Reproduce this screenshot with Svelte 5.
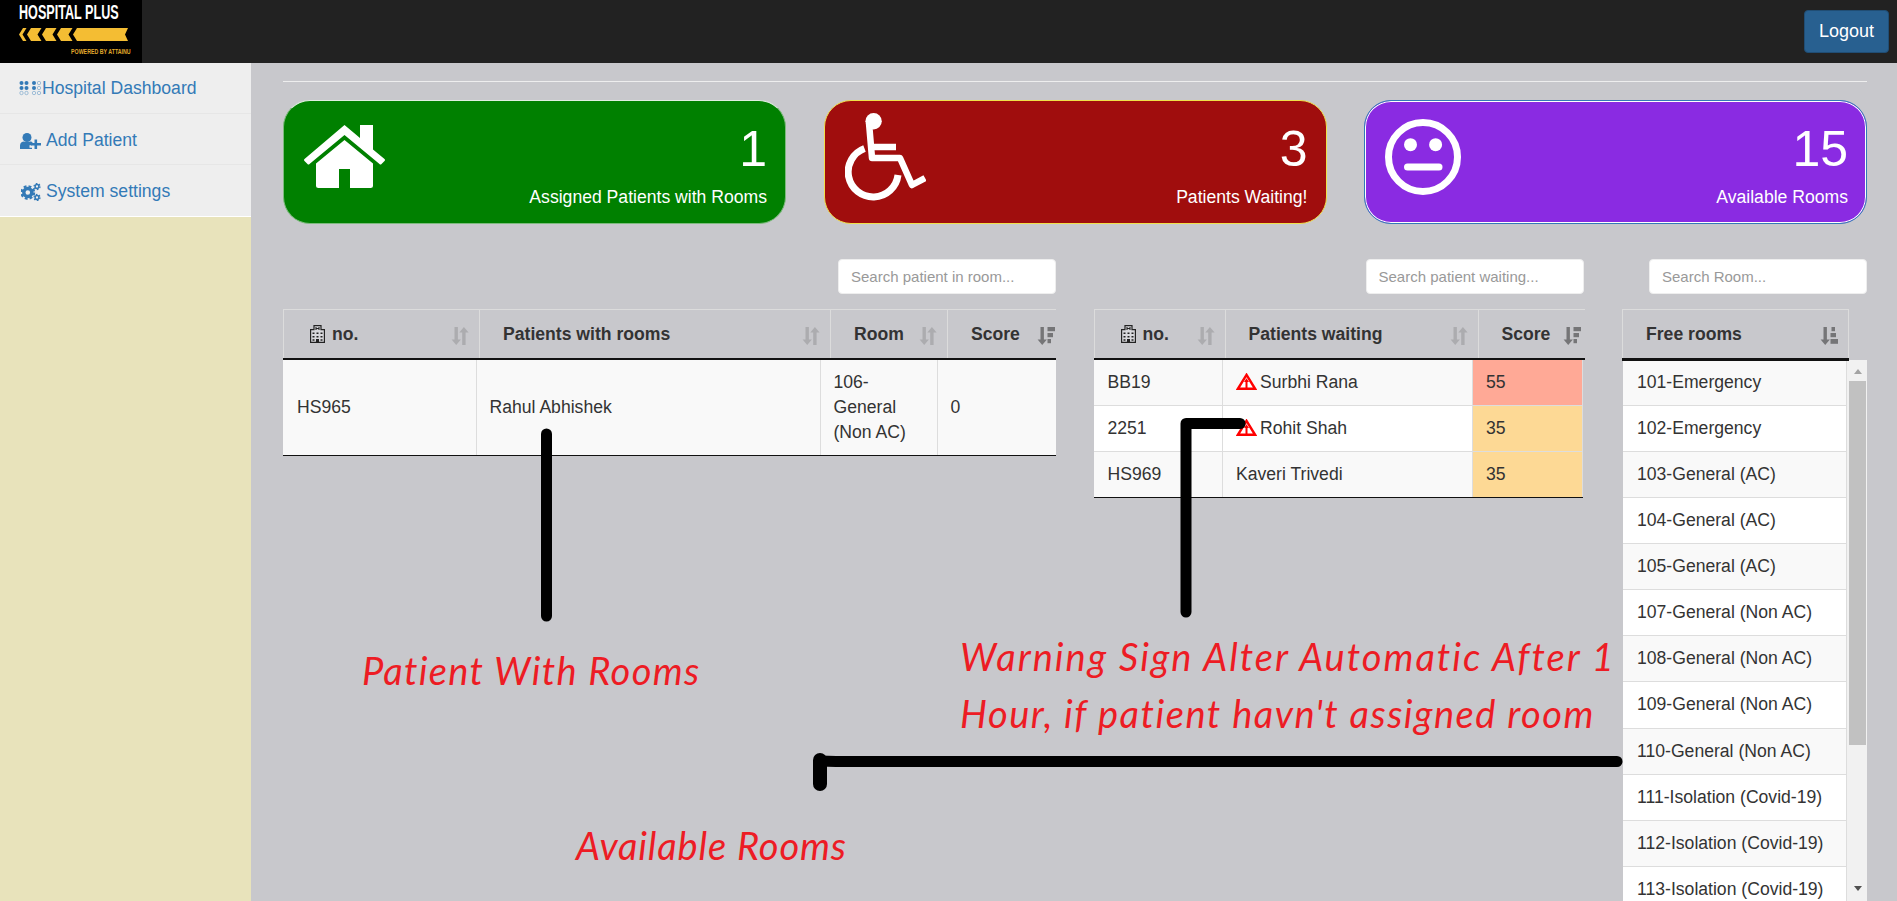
<script>
  const waiting = [
    { no: 'BB19', name: 'Surbhi Rana', score: 55, warn: true },
    { no: '2251', name: 'Rohit Shah', score: 35, warn: true },
    { no: 'HS969', name: 'Kaveri Trivedi', score: 35, warn: false },
  ];

  const rooms = [
    '101-Emergency',
    '102-Emergency',
    '103-General (AC)',
    '104-General (AC)',
    '105-General (AC)',
    '107-General (Non AC)',
    '108-General (Non AC)',
    '109-General (Non AC)',
    '110-General (Non AC)',
    '111-Isolation (Covid-19)',
    '112-Isolation (Covid-19)',
    '113-Isolation (Covid-19)',
  ];
</script>

{#snippet sort(kind)}
  <svg class="sort" class:active={kind !== 'both'} viewBox="0 0 18 18" width="18" height="18">
    <path d="M3.5 0h3.4v12.5h3L5.2 18 .6 12.5h2.9z" />
    {#if kind === 'both'}
      <path d="M11.2 18h3.4V5.5h3L12.9 0 8.3 5.5h2.9z" />
    {:else if kind === 'desc'}
      <rect x="10.5" y="0" width="7.5" height="4.2" />
      <rect x="10.5" y="6" width="5.5" height="4.2" />
      <rect x="10.5" y="12" width="3.5" height="4.2" />
    {:else}
      <rect x="11.5" y="0" width="3.500" height="4.200" />
      <rect x="10.5" y="6" width="5.500" height="4.200" />
      <rect x="10.5" y="12" width="7.500" height="4.800" />
    {/if}
  </svg>
{/snippet}

{#snippet hospital()}
  <svg class="hosp" viewBox="0 0 15 18" width="15" height="18">
    <path d="M4 .6h7v4h3.4v12.8H.6V4.6H4z" fill="#d8d8dc" stroke="#222" stroke-width="1.2" />
    <path d="M6 2v3M9 2v3M6 3.5h3" stroke="#222" stroke-width="1.1" fill="none" />
    <path d="M2.5 7.5h2v1.6h-2zM6.5 7.5h2v1.6h-2zM10.5 7.5h2v1.6h-2zM2.5 11h2v1.6h-2zM6.5 11h2v1.6h-2zM10.5 11h2v1.6h-2zM6 14h3v3.4H6zM2.5 14.2h2v1.6h-2zM10.5 14.2h2v1.6h-2z" fill="#222" />
  </svg>
{/snippet}

{#snippet warning()}
  <svg class="warn" viewBox="0 0 21 17" width="21" height="17">
    <path d="M10.5 1.8 1.9 15.8h17.2z" fill="#fff" stroke="#f00" stroke-width="2.4" stroke-linejoin="miter" />
    <path d="M10.5 5.2 8 9h1.5v6h2V9H13z" fill="#f00" />
  </svg>
{/snippet}

<div class="page">
  <header class="navbar">
    <div class="logo">
      <div class="logo-name">HOSPITAL PLUS</div>
      <svg class="logo-bar" viewBox="0 0 109 13" width="109" height="13">
        <path d="M4 0h3.500L3.500 6.500 7.500 13H4L0 6.500zM12 0h10.500l-4 6.500 4 6.500H12L8 6.500zM27 0h10.500l-4 6.500 4 6.500H27l-4-6.500zM42 0h11.500l-4 6.500 4 6.500H42l-4-6.500zM58 0h51l-3 6.500 3 6.500H58l-4-6.500z" fill="#f4bd33" />
      </svg>
      <div class="logo-sub">POWERED BY ATTAINU</div>
    </div>
    <button class="logout">Logout</button>
  </header>

  <div class="body">
    <aside class="sidebar">
      <nav>
        <a href="#dash">
          <svg class="dash" viewBox="0 0 23 15" width="23" height="15">
            <g fill="#337ab7">
              <circle cx="2.500" cy="2" r="2" /><circle cx="7.500" cy="2" r="2" />
              <circle cx="2.500" cy="7" r="2" /><circle cx="7.500" cy="7" r="2" />
              <circle cx="15" cy="2" r="2" /><circle cx="15" cy="7" r="2" />
            </g>
            <g fill="none" stroke="#337ab7" stroke-opacity=".5" stroke-width=".8">
              <circle cx="2.500" cy="12" r="1.700" /><circle cx="7.500" cy="12" r="1.700" />
              <circle cx="15" cy="12" r="1.700" /><circle cx="20" cy="2" r="1.700" />
              <circle cx="20" cy="7" r="1.700" /><circle cx="20" cy="12" r="1.700" />
            </g>
          </svg>Hospital Dashboard
        </a>
        <a href="#add">
          <svg class="ico" viewBox="0 0 21 16" width="21" height="16">
            <circle cx="7" cy="4.500" r="4.500" fill="#337ab7" />
            <path d="M0 16v-3.500C0 10 2 8.500 4 8.500c1 .8 5 .8 6 0 1.200 0 2.300.5 3 1.300h-1v2.500H9.500v2.400H12V16z" fill="#337ab7" />
            <path d="M11 10h3.500V6.500h2.600V10H21v2.500h-3.900V16h-2.600v-3.500H11z" fill="#337ab7" />
          </svg>Add Patient
        </a>
        <a href="#settings">
          <svg class="ico cogs" viewBox="0 0 20 18" width="20" height="18">
            <g fill="none" stroke="#337ab7">
              <circle cx="6.800" cy="9.500" r="4" stroke-width="3.400" />
              <circle cx="6.800" cy="9.500" r="6.200" stroke-width="2.400" stroke-dasharray="2.800 2.070" />
              <circle cx="16" cy="3.500" r="1.900" stroke-width="1.500" />
              <circle cx="16" cy="3.500" r="3" stroke-width="1.300" stroke-dasharray="1.600 1.540" />
              <circle cx="16" cy="14.500" r="1.900" stroke-width="1.500" />
              <circle cx="16" cy="14.500" r="3" stroke-width="1.300" stroke-dasharray="1.600 1.540" />
            </g>
          </svg>System settings
        </a>
      </nav>
    </aside>

    <main class="main">
      <hr />

      <section class="cards">
        <div class="card green">
          <svg class="card-icon" viewBox="0 0 81 63" width="81" height="63" fill="#fff">
            <path d="M40.500 0 56 13V0h13v24.500L80.500 34q1 1 0 2l-3 3q-1 1-2 0l-35-29-35 29q-1 1-2 0l-3-3q-1-1 0-2z" />
            <path d="M40.500 15 69 38.500v22q0 2.500-2.500 2.500H46V44H35v19H14.500Q12 63 12 60.500v-22z" />
          </svg>
          <div class="card-text">
            <div class="num">1</div>
            <div class="label">Assigned Patients with Rooms</div>
          </div>
        </div>
        <div class="card red">
          <svg class="card-icon" viewBox="0 0 81 88" width="81" height="88">
            <circle cx="28.600" cy="8.300" r="8.200" fill="#fff" />
            <path d="M24 10l3 35h28l12 27 13-7" fill="none" stroke="#fff" stroke-width="6.500" stroke-linejoin="round" />
            <path d="M28 34h23" stroke="#fff" stroke-width="6.500" fill="none" />
            <path d="M19.500 35.500A25 25 0 1 0 53 62" fill="none" stroke="#fff" stroke-width="7" />
          </svg>
          <div class="card-text">
            <div class="num">3</div>
            <div class="label">Patients Waiting!</div>
          </div>
        </div>
        <div class="card purple">
          <svg class="card-icon" viewBox="0 0 76 76" width="76" height="76">
            <circle cx="38" cy="38" r="34.500" fill="none" stroke="#fff" stroke-width="7" />
            <circle cx="25.500" cy="25.700" r="6.500" fill="#fff" />
            <circle cx="50.600" cy="25.700" r="6.500" fill="#fff" />
            <rect x="19" y="44.500" width="38.500" height="7" rx="3.500" fill="#fff" />
          </svg>
          <div class="card-text">
            <div class="num">15</div>
            <div class="label">Available Rooms</div>
          </div>
        </div>
      </section>

      <section class="tables">
        <div class="panel">
          <div class="search"><input placeholder="Search patient in room..." /></div>
          <div class="clip">
            <table class="head t1-head">
              <thead>
                <tr>
                  <th class="first">{@render hospital()} no.{@render sort('both')}</th>
                  <th>Patients with rooms{@render sort('both')}</th>
                  <th>Room{@render sort('both')}</th>
                  <th>Score{@render sort('desc')}</th>
                </tr>
              </thead>
            </table>
            <table class="rows t1-rows">
              <tbody>
                <tr>
                  <td>HS965</td>
                  <td>Rahul Abhishek</td>
                  <td>106-General (Non AC)</td>
                  <td>0</td>
                </tr>
              </tbody>
            </table>
          </div>
        </div>

        <div class="panel">
          <div class="search"><input placeholder="Search patient waiting..." /></div>
          <div class="clip">
            <table class="head t2-head">
              <thead>
                <tr>
                  <th class="first">{@render hospital()} no.{@render sort('both')}</th>
                  <th>Patients waiting{@render sort('both')}</th>
                  <th>Score{@render sort('desc')}</th>
                </tr>
              </thead>
            </table>
            <table class="rows t2-rows">
              <tbody>
                {#each waiting as p}
                  <tr>
                    <td>{p.no}</td>
                    <td>{#if p.warn}{@render warning()}{/if}{p.name}</td>
                    <td class:hot={p.score > 50} class:warm={p.score <= 50}>{p.score}</td>
                  </tr>
                {/each}
              </tbody>
            </table>
          </div>
        </div>

        <div class="panel">
          <div class="search"><input placeholder="Search Room..." /></div>
          <table class="head t3-head">
            <thead>
              <tr><th>Free rooms{@render sort('asc')}</th></tr>
            </thead>
          </table>
          <div class="room-scroll">
            <table class="rows t3-rows">
              <tbody>
                {#each rooms as room}
                  <tr><td>{room}</td></tr>
                {/each}
              </tbody>
            </table>
            <div class="scrollbar">
              <span class="arrow up"></span>
              <span class="thumb"></span>
              <span class="arrow down"></span>
            </div>
          </div>
        </div>
      </section>
    </main>
  </div>

  <!-- annotations drawn on top of the screenshot -->
  <svg class="ink" viewBox="0 0 1897 901" width="1897" height="901">
    <g fill="none" stroke="#000" stroke-width="11" stroke-linecap="round" stroke-linejoin="round">
      <path d="M546.500 434V616" />
      <path d="M1186 612V423.500H1240" />
      <path d="M1617 761.500H836L820 761" />
      <path d="M820 760V784" stroke-width="14" />
    </g>
  </svg>
  <div class="note n1">Patient With Rooms</div>
  <div class="note n2">Warning Sign Alter Automatic After 1</div>
  <div class="note n3">Hour, if patient havn't assigned room</div>
  <div class="note n4">Available Rooms</div>
</div>

<style>
  :global(body) {
    overflow: hidden;
  }

  .page {
    position: relative;
    height: 901px;
    overflow: hidden;
    display: flex;
    flex-direction: column;
    font-family: "Liberation Sans", Arial, sans-serif;
    font-size: 17.6px;
    line-height: 1.42857;
    color: #333;
  }

  .navbar {
    height: 63px;
    flex: none;
    background: #222;
    display: flex;
    justify-content: space-between;
    align-items: flex-start;
  }

  .logo {
    width: 142px;
    height: 63px;
    background: #000;
    padding: 2px 0 0 19px;
    box-sizing: border-box;
    overflow: hidden;
  }

  .logo-name {
    font-size: 21px;
    font-weight: 700;
    line-height: 20px;
    color: #fff;
    white-space: nowrap;
    transform: scaleX(0.6);
    transform-origin: left;
  }

  .logo-bar {
    display: block;
    margin-top: 6px;
  }

  .logo-sub {
    font-size: 8px;
    font-weight: 700;
    line-height: 9px;
    color: #e0a92c;
    margin: 6px 0 0 52px;
    white-space: nowrap;
    transform: scaleX(0.66);
    transform-origin: left;
  }

  .logout {
    margin: 10px 8px 0 0;
    width: 85px;
    height: 43px;
    background: #286090;
    border: 1px solid #204d74;
    border-radius: 4px;
    color: #fff;
    font: inherit;
    font-size: 18px;
  }

  .body {
    flex: 1;
    display: flex;
    min-height: 0;
  }

  .sidebar {
    width: 251px;
    flex: none;
    background: #e8e3bb;
    box-sizing: border-box;
  }

  nav {
    background: #eee;
    border-bottom: 1px solid #fff;
  }

  nav a {
    display: flex;
    align-items: center;
    height: 49px;
    padding: 1px 0 0 19px;
    color: #337ab7;
    text-decoration: none;
    border-bottom: 1px solid #e6e6e6;
  }

  nav a:nth-child(2) {
    padding-top: 3px;
    height: 47px;
  }

  nav a:last-child {
    padding-top: 2px;
    border-bottom: none;
    height: 49px;
  }

  .dash {
    flex: none;
  }

  .ico {
    flex: none;
    margin: 0 5px 0 1px;
  }

  .cogs {
    margin: 0 5px 0 2px;
  }

  .main {
    flex: 1;
    min-width: 0;
    background: #c8c8cc;
    padding: 18px 30px 0 32px;
  }

  hr {
    margin: 0 0 18px;
    border: none;
    border-top: 1px solid #eee;
  }

  .cards {
    display: grid;
    grid-template-columns: repeat(3, 503px);
    justify-content: space-between;
  }

  .card {
    height: 124px;
    box-sizing: border-box;
    border-radius: 27px;
    border: 1px solid;
    display: flex;
    justify-content: space-between;
    align-items: center;
    padding: 0 18px 0 20px;
    color: #fff;
  }

  .green {
    background: #008000;
    border-color: #e0efe0 #7dbb7d #7dbb7d;
  }

  .red {
    background: #a00d0d;
    border-color: #f0e04a;
  }

  .purple {
    background: #8a2be2;
    border-color: #337ab7;
    box-shadow: inset 0 0 0 1px #fff;
  }

  .card-icon {
    margin-bottom: 11px;
    flex: none;
  }

  .card-text {
    text-align: right;
  }

  .num {
    font-size: 50px;
    line-height: 56px;
    margin-top: 7px;
  }

  .label {
    font-size: 17.6px;
    line-height: 25px;
    margin-top: 8px;
  }

  .tables {
    display: grid;
    grid-template-columns: 773px 491px 245px;
    justify-content: space-between;
    align-items: start;
    margin-top: 35px;
  }

  .search {
    display: flex;
    justify-content: flex-end;
    height: 35px;
    margin-bottom: 15px;
  }

  .panel:nth-child(2) .search {
    margin-right: 1px;
  }

  input {
    width: 218px;
    height: 35px;
    box-sizing: border-box;
    padding: 0 12px;
    border: 1px solid #eee;
    border-radius: 4px;
    background: #fff;
    font: inherit;
    font-size: 15px;
  }

  input::placeholder {
    color: #999;
    opacity: 1;
  }

  .clip {
    overflow: hidden;
  }

  table {
    border-collapse: collapse;
    table-layout: fixed;
  }

  .head {
    position: relative;
    z-index: 1;
  }

  th {
    position: relative;
    height: 49px;
    box-sizing: border-box;
    padding: 1px 0 0 23px;
    border: 1px solid #dcdcdc;
    border-bottom: 2px solid #111;
    font-weight: 700;
    text-align: left;
    white-space: nowrap;
  }

  th.first {
    padding-left: 26px;
  }

  .hosp {
    vertical-align: -3px;
    margin-right: 2px;
  }

  .sort {
    position: absolute;
    right: 10px;
    top: 17px;
    fill: #333;
    opacity: 0.18;
  }

  .sort.active {
    opacity: 0.55;
  }

  td {
    box-sizing: border-box;
    padding: 10px 13px;
    border: 1px solid #ddd;
    vertical-align: middle;
    background: #fff;
  }

  tbody tr:nth-child(odd) td {
    background: #f9f9f9;
  }

  tbody tr:first-child td {
    border-top: none;
  }

  tbody tr:last-child td {
    border-bottom: 1px solid #111;
  }

  tr td:first-child {
    border-left: none;
    padding-left: 14px;
  }

  .warn {
    vertical-align: -2px;
    margin-right: 3px;
  }

  tbody tr td.hot {
    background: #ffa996;
  }

  tbody tr td.warm {
    background: #fdd995;
  }

  .t1-head {
    width: 782px;
  }

  .t1-head th:nth-child(1) {
    width: 196px;
  }

  .t1-head th:nth-child(2) {
    width: 351px;
  }

  .t1-head th:nth-child(3) {
    width: 117px;
  }

  .t1-head th:nth-child(4) {
    width: 118px;
  }

  .t1-rows {
    width: 773px;
  }

  .t1-rows td:nth-child(1) {
    width: 193px;
  }

  .t1-rows td:nth-child(2) {
    width: 344px;
  }

  .t1-rows td:nth-child(3) {
    width: 117px;
  }

  .t1-rows td:nth-child(4) {
    width: 119px;
  }

  .t2-head {
    width: 497px;
  }

  .t2-head th:nth-child(1) {
    width: 131px;
  }

  .t2-head th:nth-child(2) {
    width: 253px;
  }

  .t2-head th:nth-child(3) {
    width: 113px;
  }

  .t2-rows {
    width: 489px;
  }

  .t2-rows td:nth-child(1) {
    width: 129px;
  }

  .t2-rows td:nth-child(2) {
    width: 250px;
  }

  .t2-rows td:nth-child(3) {
    width: 110px;
  }

  .t3-head {
    width: 227px;
  }

  .room-scroll {
    position: relative;
    display: flex;
    height: 541px;
    overflow: hidden;
  }

  /* dark rule under the Free rooms header, sits over the first row */
  .room-scroll::before {
    content: "";
    position: absolute;
    left: 0;
    top: 0;
    width: 227px;
    height: 1px;
    background: #111;
    z-index: 1;
  }

  .t3-rows {
    width: 224px;
    margin: 0 0 0 1px;
    flex: none;
    align-self: flex-start;
  }

  .t3-rows td {
    white-space: nowrap;
    border-left: 1px solid #ddd;
  }

  .scrollbar {
    flex: 1;
    background: #f1f1f1;
    display: flex;
    flex-direction: column;
    align-items: center;
    padding-left: 1px;
    position: relative;
  }

  .thumb {
    width: 17px;
    height: 364px;
    background: #c1c1c1;
    margin-top: 7px;
  }

  .arrow {
    width: 0;
    height: 0;
    border-left: 4.5px solid transparent;
    border-right: 4.5px solid transparent;
  }

  .arrow.up {
    margin-top: 9px;
    border-bottom: 5px solid #a3a3a3;
  }

  .arrow.down {
    position: absolute;
    bottom: 10px;
    border-top: 5px solid #505050;
  }

  .ink {
    position: absolute;
    left: 0;
    top: 0;
    pointer-events: none;
  }

  .note {
    position: absolute;
    font-family: "Lato", "Open Sans", sans-serif;
    font-style: italic;
    font-size: 38px;
    line-height: 40px;
    color: #ed1c24;
    white-space: nowrap;
    pointer-events: none;
  }

  .n1 {
    left: 362px;
    top: 650px;
    letter-spacing: 1.33px;
  }

  .n2 {
    left: 960px;
    top: 636px;
    letter-spacing: 2px;
  }

  .n3 {
    left: 960px;
    top: 693px;
    letter-spacing: 1.5px;
  }

  .n4 {
    left: 576px;
    top: 825px;
    letter-spacing: 0.9px;
  }
</style>
